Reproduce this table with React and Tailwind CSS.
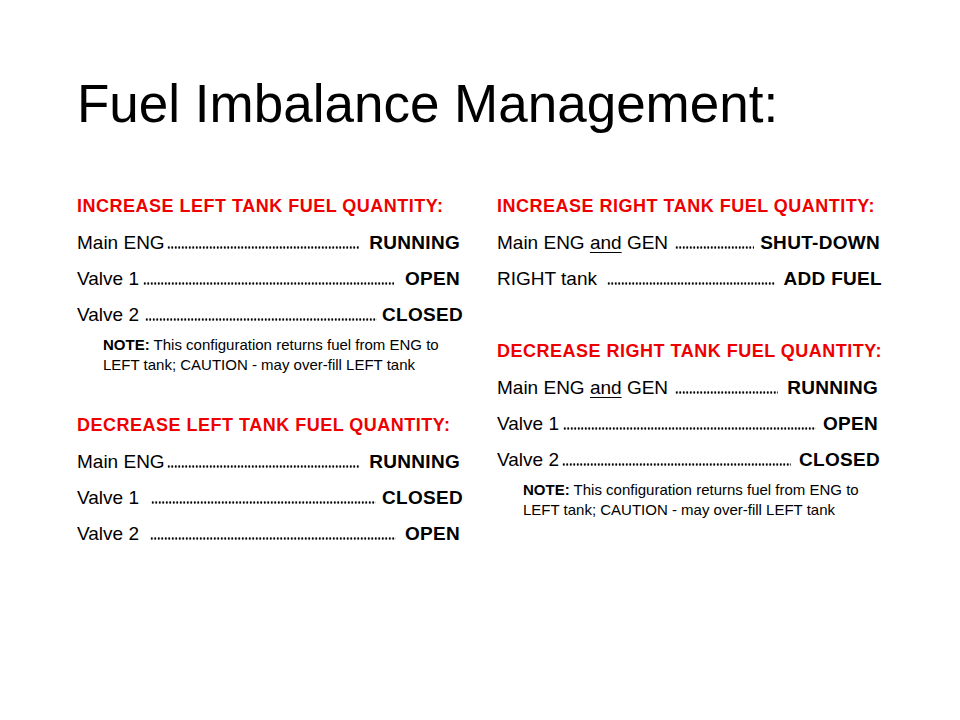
import React from "react";

function Leader({ cls }) {
  return (
    <span
      className={
        "flex-1 h-[3px] bg-[radial-gradient(circle,#000_0.95px,transparent_1.35px)] bg-[length:3.5px_3px] bg-repeat-x " +
        cls
      }
    />
  );
}

function Row({ label, value, leader, rowCls }) {
  return (
    <div className={"flex items-baseline leading-[36px] text-[19px] text-black " + rowCls}>
      <span className="whitespace-nowrap">{label}</span>
      <Leader cls={leader} />
      <span className="font-bold tracking-[0.3px] whitespace-nowrap">{value}</span>
    </div>
  );
}

function Heading({ children, cls }) {
  return (
    <div
      className={
        "text-[18px] leading-[37px] font-bold tracking-[0.5px] text-[#ee0000] whitespace-nowrap " +
        cls
      }
    >
      {children}
    </div>
  );
}

function Note() {
  return (
    <div className="mt-[2px] pl-[26px] text-[15px] leading-[20px] text-black">
      <span className="font-bold">NOTE:</span> This configuration returns fuel from ENG to
      <br />
      LEFT tank; CAUTION - may over-fill LEFT tank
    </div>
  );
}

const EngGen = (
  <>
    Main ENG <span className="underline underline-offset-[3px]">and</span> GEN
  </>
);

export default function App() {
  return (
    <div className="w-[960px] h-[720px] bg-white overflow-hidden pt-[77px] pl-[77px] font-['Liberation_Sans',Arial,sans-serif] text-black">
      <h1 className="text-[53px] leading-none font-normal whitespace-nowrap">
        Fuel Imbalance Management:
      </h1>
      <div className="mt-[58px] flex gap-[34px]">
        <div className="w-[386px] flex flex-col">
          <Heading cls="">INCREASE LEFT TANK FUEL QUANTITY:</Heading>
          <Row label="Main ENG" value="RUNNING" leader="ml-[2px] mr-[10px]" rowCls="pr-[3px]" />
          <Row label="Valve 1" value="OPEN" leader="ml-[4px] mr-[11px]" rowCls="pr-[3px]" />
          <Row label="Valve 2" value="CLOSED" leader="ml-[6px] mr-[5px]" rowCls="pr-0" />
          <Note />
          <Heading cls="mt-[32px]">DECREASE LEFT TANK FUEL QUANTITY:</Heading>
          <Row label="Main ENG" value="RUNNING" leader="ml-[2px] mr-[10px]" rowCls="pr-[3px]" />
          <Row label="Valve 1" value="CLOSED" leader="ml-[12px] mr-[6px]" rowCls="pr-0" />
          <Row label="Valve 2" value="OPEN" leader="ml-[11px] mr-[9px]" rowCls="pr-[3px]" />
        </div>
        <div className="w-[386px] flex flex-col">
          <Heading cls="">INCREASE RIGHT TANK FUEL QUANTITY:</Heading>
          <Row label={EngGen} value="SHUT-DOWN" leader="ml-[7px] mr-[6px]" rowCls="pr-[3px]" />
          <Row label="RIGHT tank" value="ADD FUEL" leader="ml-[10px] mr-[9px]" rowCls="pr-[1px]" />
          <Heading cls="mt-[36px]">DECREASE RIGHT TANK FUEL QUANTITY:</Heading>
          <Row label={EngGen} value="RUNNING" leader="ml-[7px] mr-[9px]" rowCls="pr-[5px]" />
          <Row label="Valve 1" value="OPEN" leader="ml-[4px] mr-[7px]" rowCls="pr-[5px]" />
          <Row label="Valve 2" value="CLOSED" leader="ml-[3px] mr-[8px]" rowCls="pr-[3px]" />
          <Note />
        </div>
      </div>
    </div>
  );
}
